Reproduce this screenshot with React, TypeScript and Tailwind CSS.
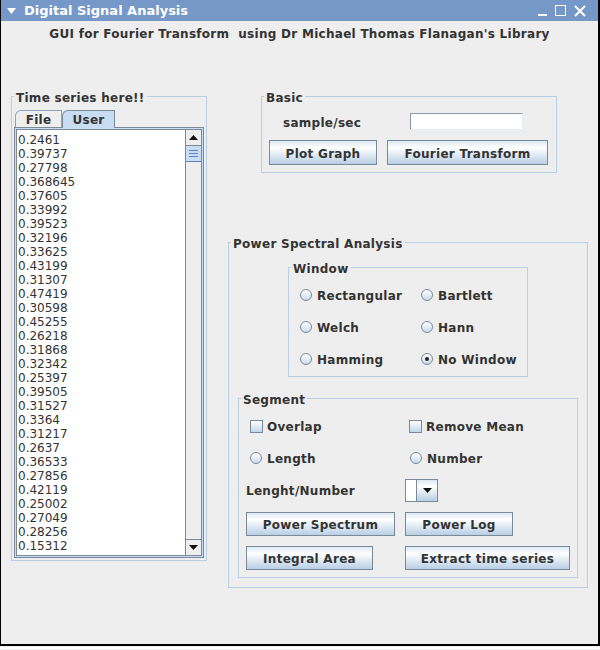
import { FC, ReactNode } from "react";

const values = [
    "0.2461", "0.39737", "0.27798", "0.368645", "0.37605", "0.33992", "0.39523", "0.32196",
    "0.33625", "0.43199", "0.31307", "0.47419", "0.30598", "0.45255", "0.26218", "0.31868",
    "0.32342", "0.25397", "0.39505", "0.31527", "0.3364", "0.31217", "0.2637", "0.36533",
    "0.27856", "0.42119", "0.25002", "0.27049", "0.28256", "0.15312",
];

const Titled: FC<{ title: string; className: string; children?: ReactNode }> = ({ title, className, children }) => (
    <div className={`relative border border-[#b8cfe5] ${className}`}>
        <span className="absolute -top-[7px] left-[2px] bg-[#eeeeee] px-[2px] leading-[16px] font-bold tracking-[0.28px]">
            {title}
        </span>
        {children}
    </div>
);

const Btn: FC<{ className: string; children: ReactNode }> = ({ className, children }) => (
    <div
        className={`flex items-center justify-center border border-[#7a8a99] bg-[linear-gradient(to_bottom,#dde8f3,#ffffff_30%,#b8cfe5)] pt-[2px] font-bold tracking-[0.28px] ${className}`}
    >
        {children}
    </div>
);

const Label: FC<{ className?: string; children: ReactNode }> = ({ className, children }) => (
    <span className={`pt-[2px] font-bold tracking-[0.28px] ${className ?? ""}`}>{children}</span>
);

const Radio: FC<{ label: string; checked?: boolean }> = ({ label, checked }) => (
    <div className="flex items-center gap-[5px]">
        <div className="flex h-[12px] w-[12px] items-center justify-center rounded-full border border-[#7a8a99] bg-[linear-gradient(to_bottom,#ffffff,#c9daec)]">
            {checked && <div className="h-[4px] w-[4px] rounded-full bg-[#222222]" />}
        </div>
        <Label>{label}</Label>
    </div>
);

const Check: FC<{ label: string }> = ({ label }) => (
    <div className="flex items-center gap-[4px]">
        <div className="h-[13px] w-[13px] border border-[#7a8a99] bg-[linear-gradient(to_bottom,#ffffff,#c2d5ea)]" />
        <Label>{label}</Label>
    </div>
);

const Arrow: FC<{ up?: boolean }> = ({ up }) => (
    <svg width="9" height="5" viewBox="0 0 9 5">
        <path d={up ? "M0 5 L4.5 0 L9 5 Z" : "M0 0 L9 0 L4.5 5 Z"} fill="#111111" />
    </svg>
);

export default function App() {
    return (
        <div className="h-[650px] w-[600px] bg-[#eeeeee] font-['DejaVu_Sans',sans-serif] text-[12px] text-[#333333]">
            <div className="h-[646px] border-b-2 border-l border-r-2 border-black">
                {/* title bar */}
                <div className="flex h-[21px] items-center bg-[#7598c9] text-white">
                    <svg className="ml-[6px]" width="9" height="6" viewBox="0 0 9 6">
                        <path d="M0 0 L9 0 L4.5 6 Z" fill="#ffffff" />
                    </svg>
                    <span className="ml-[8px] text-[13px] font-bold">Digital Signal Analysis</span>
                    <div className="ml-auto mr-[12px] flex items-center gap-[8px]">
                        <div className="mt-[8px] h-[2px] w-[9px] bg-white" />
                        <div className="h-[11px] w-[11px] border-[1.5px] border-white" />
                        <svg width="12" height="12" viewBox="0 0 12 12">
                            <path d="M1 1 L11 11 M11 1 L1 11" stroke="#ffffff" strokeWidth="2" />
                        </svg>
                    </div>
                </div>

                <div className="flex h-[24px] items-center justify-center">
                    <Label>GUI for Fourier Transform&nbsp; using Dr Michael Thomas Flanagan's Library</Label>
                </div>

                <div className="flex items-start">
                    {/* time series */}
                    <Titled title="Time series here!!" className="ml-[10px] mt-[51px] h-[465px] w-[196px]">
                        <div className="ml-[3px] mt-[13px] flex h-[17px] items-end">
                            <div className="flex h-[17px] w-[47px] items-center justify-center rounded-tl-[6px] border-l border-r border-t border-[#8da4bd] pt-[2px] font-bold tracking-[0.28px]">
                                File
                            </div>
                            <div className="relative z-10 -mb-[1px] flex h-[18px] w-[53px] items-center justify-center rounded-tl-[6px] border-l border-r border-t border-[#7a8a99] bg-[#c8ddf2] pt-[1px] font-bold tracking-[0.28px]">
                                User
                            </div>
                        </div>
                        <div className="ml-[2px] h-[431px] w-[190px] border border-[#7a8a99] bg-[#c8ddf2] p-[1px]">
                            <div className="flex h-full border border-[#7a8a99] bg-white">
                                <div className="flex-1 overflow-hidden pl-[1px] pt-[3px] leading-[14px]">
                                    {values.map((v, i) => (
                                        <div key={i}>{v}</div>
                                    ))}
                                </div>
                                <div className="flex w-[16px] flex-col border-l border-[#7a8a99] bg-[#eeeeee]">
                                    <div className="flex h-[16px] items-center justify-center border-b border-[#7a8a99]">
                                        <Arrow up />
                                    </div>
                                    <div className="flex h-[16px] flex-col items-center justify-center gap-[2px] border-b border-[#6382bf] bg-[#c8ddf2]">
                                        <div className="h-[1px] w-[9px] bg-[#6382bf]" />
                                        <div className="h-[1px] w-[9px] bg-[#6382bf]" />
                                        <div className="h-[1px] w-[9px] bg-[#6382bf]" />
                                    </div>
                                    <div className="flex-1" />
                                    <div className="flex h-[16px] items-center justify-center border-t border-[#7a8a99]">
                                        <Arrow />
                                    </div>
                                </div>
                            </div>
                        </div>
                    </Titled>

                    <div className="ml-[21px] flex flex-col">
                        {/* basic */}
                        <Titled title="Basic" className="ml-[33px] mt-[51px] h-[77px] w-[296px]">
                            <div className="mt-[16px] flex h-[17px] items-center">
                                <Label className="w-[148px] pl-[21px]">sample/sec</Label>
                                <div className="h-[17px] w-[113px] border border-b-[#e4ecf5] border-l-[#8a99a8] border-r-[#e4ecf5] border-t-[#8a99a8] bg-white" />
                            </div>
                            <div className="mt-[10px] flex gap-[10px] pl-[7px]">
                                <Btn className="h-[25px] w-[108px]">Plot Graph</Btn>
                                <Btn className="h-[25px] w-[161px]">Fourier Transform</Btn>
                            </div>
                        </Titled>

                        {/* power spectral analysis */}
                        <Titled title="Power Spectral Analysis" className="mt-[69px] h-[346px] w-[360px]">
                            <Titled title="Window" className="ml-[59px] mt-[24px] h-[110px] w-[240px]">
                                <div className="ml-[11px] mt-[11px] grid grid-cols-[121px_auto] auto-rows-[32px] items-center">
                                    <Radio label="Rectangular" />
                                    <Radio label="Bartlett" />
                                    <Radio label="Welch" />
                                    <Radio label="Hann" />
                                    <Radio label="Hamming" />
                                    <Radio label="No Window" checked />
                                </div>
                            </Titled>

                            <Titled title="Segment" className="ml-[9px] mt-[21px] h-[180px] w-[340px]">
                                <div className="ml-[11px] mt-[11px] grid grid-cols-[159px_auto] auto-rows-[32px] items-center">
                                    <Check label="Overlap" />
                                    <Check label="Remove Mean" />
                                    <Radio label="Length" />
                                    <div className="ml-[1px]">
                                        <Radio label="Number" />
                                    </div>
                                </div>
                                <div className="flex h-[32px] items-center">
                                    <Label className="w-[166px] pl-[7px]">Lenght/Number</Label>
                                    <div className="flex h-[23px] w-[33px] border border-[#7a8a99]">
                                        <div className="w-[11px] border-r border-[#7a8a99] bg-white" />
                                        <div className="flex flex-1 items-center justify-center bg-[linear-gradient(to_bottom,#dde8f3,#ffffff_30%,#b8cfe5)]">
                                            <Arrow />
                                        </div>
                                    </div>
                                </div>
                                <div className="mt-[6px] flex gap-[10px] pl-[7px]">
                                    <Btn className="h-[24px] w-[149px]">Power Spectrum</Btn>
                                    <Btn className="h-[24px] w-[108px]">Power Log</Btn>
                                </div>
                                <div className="mt-[10px] flex gap-[32px] pl-[7px]">
                                    <Btn className="h-[24px] w-[127px]">Integral Area</Btn>
                                    <Btn className="h-[24px] w-[165px]">Extract time series</Btn>
                                </div>
                            </Titled>
                        </Titled>
                    </div>
                </div>
            </div>
            <div className="mt-[1px] h-[2px] bg-white" />
        </div>
    );
}
